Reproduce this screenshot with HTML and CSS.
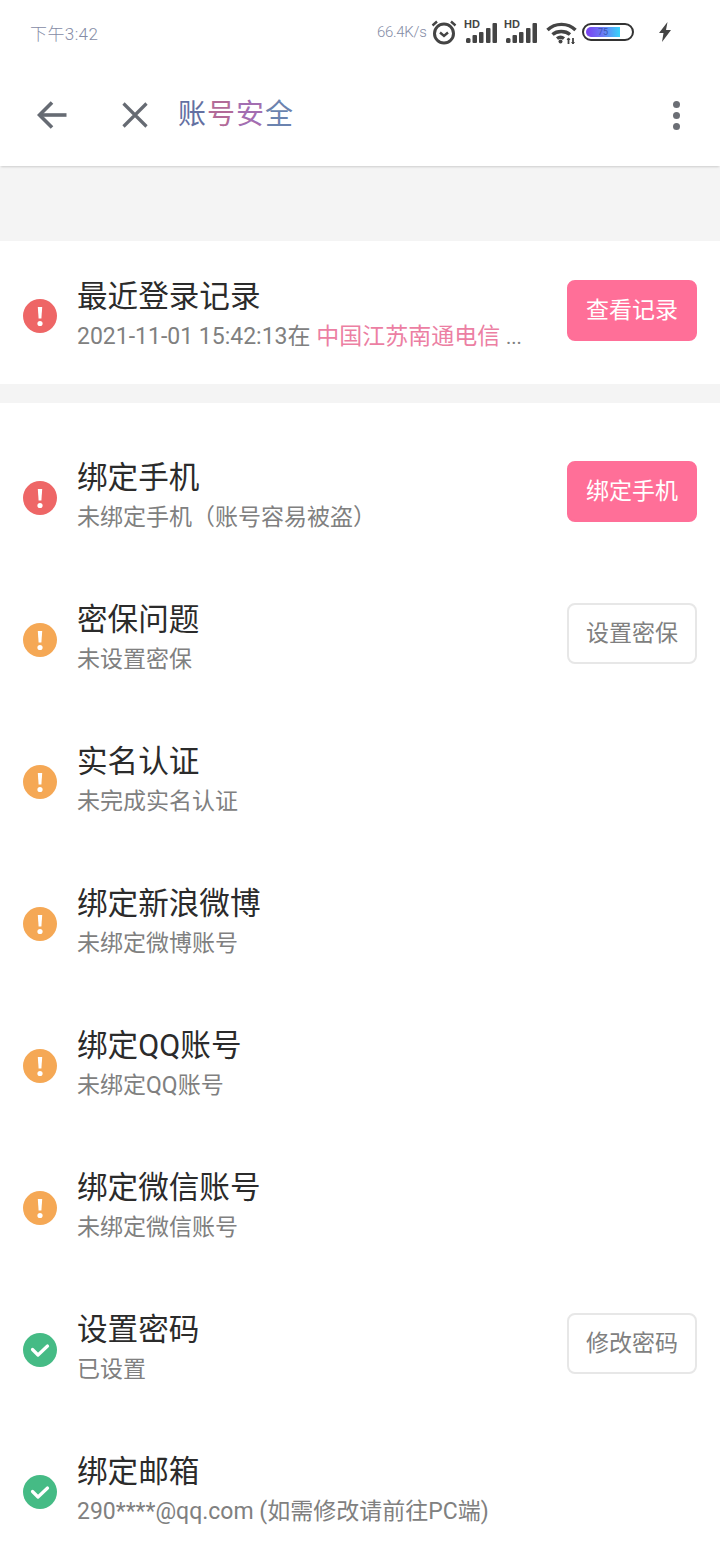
FILE: index.html
```html
<!DOCTYPE html>
<html lang="zh-CN">
<head>
	<meta charset="utf-8">
	<title>账号安全</title>
	<link rel="stylesheet" href="styles.css">
</head>
<body>
	<svg class="defs" width="0" height="0">
		<symbol id="warn" viewBox="0 0 34 34">
			<circle cx="17" cy="17" r="17"></circle>
			<path d="M14.800 8h4.400l-.8 11.500h-2.800z" fill="#fff"></path>
			<circle cx="17" cy="24.500" r="2.600" fill="#fff"></circle>
		</symbol>
		<symbol id="ok" viewBox="0 0 34 34">
			<circle cx="17" cy="17" r="17"></circle>
			<path d="M9.500 16.500l5.500 5.500 9.500-9" fill="none" stroke="#fff" stroke-width="3.200" stroke-linecap="round" stroke-linejoin="round"></path>
		</symbol>
		<symbol id="signal" viewBox="0 0 33 20">
			<rect x="2" y="15" width="4.500" height="5" rx="1.500"></rect>
			<rect x="8.500" y="12" width="4.500" height="8" rx="1"></rect>
			<rect x="15" y="9" width="4.500" height="11" rx="1"></rect>
			<rect x="22" y="5" width="4.500" height="15" rx="1"></rect>
			<rect x="28.500" y="0" width="4.500" height="20" rx="1"></rect>
		</symbol>
	</svg>

	<div class="status">
		<span class="time">下午3:42</span>
		<span class="speed">66.4K/s</span>
		<svg class="alarm" width="26" height="26" viewBox="0 0 26 26" fill="none" stroke="#444" stroke-width="3">
			<circle cx="13" cy="14.500" r="9.500"></circle>
			<path d="M9 13.500l4 3.500 4-3.500" stroke-width="2.400"></path>
			<path d="M1.500 6.500L6 2.500M24.500 6.500L20 2.500" stroke-width="2.400"></path>
		</svg>
		<div class="net"><span class="hd">HD</span><svg class="bars" width="33" height="20"><use href="#signal"></use></svg></div>
		<div class="net"><span class="hd">HD</span><svg class="bars" width="33" height="20"><use href="#signal"></use></svg></div>
		<svg class="wifi" width="31" height="22" viewBox="0 0 31 22" fill="none" stroke="#444" stroke-width="3.400">
			<path d="M1.500 8C9 .500 22 .500 29.500 8"></path>
			<path d="M6.500 12.500c4.500-4 13-4 17.500 0"></path>
			<path d="M11 16.500c2-1.500 5-1.500 7 0"></path>
			<circle cx="14.500" cy="19.500" r="2" fill="#444" stroke="none"></circle>
			<path d="M22.500 16v6M27 16v6" stroke-width="1.800"></path>
			<path d="M20.500 18l2-2.500 2 2.500zM25 20l2 2.500 2-2.500z" fill="#444" stroke="none"></path>
		</svg>
		<div class="battery"><div class="level">75</div></div>
		<svg class="bolt" width="14" height="20" viewBox="0 0 14 20"><path d="M9.500 0L1 11h4.500L4 20l9-12H8z" fill="#444"></path></svg>
	</div>

	<div class="toolbar">
		<svg class="back" width="30" height="28" viewBox="0 0 30 28" fill="none" stroke="#666b73" stroke-width="3.600">
			<path d="M29.500 14H3"></path>
			<path d="M15 1.500L2.500 14 15 26.500"></path>
		</svg>
		<svg class="close" width="26" height="26" viewBox="0 0 26 26" fill="none" stroke="#666b73" stroke-width="3.200">
			<path d="M1.500 1.500l23 23M24.500 1.500l-23 23"></path>
		</svg>
		<h1 class="title"><span class="c1">账</span><span class="c2">号</span><span class="c3">安</span><span class="c4">全</span></h1>
		<div class="more"><i></i><i></i><i></i></div>
	</div>

	<div class="gap-top"></div>

	<div class="row row-login">
		<svg class="mark red"><use href="#warn"></use></svg>
		<div class="info">
			<div class="name">最近登录记录</div>
			<div class="desc">2021-11-01 15:42:13在 <span class="place">中国江苏南通电信</span> <span class="dots">...</span></div>
		</div>
		<div class="btn btn-pink">查看记录</div>
	</div>

	<div class="gap-mid"></div>

	<div class="list">
		<div class="row">
			<svg class="mark red"><use href="#warn"></use></svg>
			<div class="info">
				<div class="name">绑定手机</div>
				<div class="desc">未绑定手机（账号容易被盗）</div>
			</div>
			<div class="btn btn-pink">绑定手机</div>
		</div>
		<div class="row">
			<svg class="mark orange"><use href="#warn"></use></svg>
			<div class="info">
				<div class="name">密保问题</div>
				<div class="desc">未设置密保</div>
			</div>
			<div class="btn btn-line">设置密保</div>
		</div>
		<div class="row">
			<svg class="mark orange"><use href="#warn"></use></svg>
			<div class="info">
				<div class="name">实名认证</div>
				<div class="desc">未完成实名认证</div>
			</div>
		</div>
		<div class="row">
			<svg class="mark orange"><use href="#warn"></use></svg>
			<div class="info">
				<div class="name">绑定新浪微博</div>
				<div class="desc">未绑定微博账号</div>
			</div>
		</div>
		<div class="row">
			<svg class="mark orange"><use href="#warn"></use></svg>
			<div class="info">
				<div class="name">绑定QQ账号</div>
				<div class="desc">未绑定QQ账号</div>
			</div>
		</div>
		<div class="row">
			<svg class="mark orange"><use href="#warn"></use></svg>
			<div class="info">
				<div class="name">绑定微信账号</div>
				<div class="desc">未绑定微信账号</div>
			</div>
		</div>
		<div class="row">
			<svg class="mark green"><use href="#ok"></use></svg>
			<div class="info">
				<div class="name">设置密码</div>
				<div class="desc">已设置</div>
			</div>
			<div class="btn btn-line">修改密码</div>
		</div>
		<div class="row">
			<svg class="mark green"><use href="#ok"></use></svg>
			<div class="info">
				<div class="name">绑定邮箱</div>
				<div class="desc">290****@qq.com (如需修改请前往PC端)</div>
			</div>
		</div>
	</div>
</body>
</html>
```

FILE: styles.css
```css
html, body {
	margin: 0;
	padding: 0;
	height: 1560px;
	overflow: hidden;
	background: #fff;
	font-family: Roboto, "Noto Sans CJK SC", sans-serif;
}

.defs {
	display: block;
	height: 0;
}

/* status bar */
.status {
	display: flex;
	align-items: center;
	height: 64px;
	padding-left: 30px;
}

.time {
	width: 347px;
	font-size: 17px;
	font-weight: 300;
	letter-spacing: 0.4px;
	color: #858ca6;
}

.speed {
	width: 54px;
	font-size: 15px;
	font-weight: 300;
	letter-spacing: -0.3px;
	color: #858ca6;
}

.alarm {
	margin-right: 7px;
}

.net {
	position: relative;
	width: 33px;
	height: 20px;
	margin-right: 7px;
	margin-top: 2px;
}

.hd {
	position: absolute;
	left: 0;
	top: -3px;
	font-family: "Liberation Sans", sans-serif;
	font-size: 11px;
	font-weight: bold;
	line-height: 9px;
	color: #444;
}

.bars {
	display: block;
	fill: #444;
}

.wifi {
	margin-left: 2px;
	margin-right: 5px;
	margin-top: 2px;
}

.battery {
	box-sizing: border-box;
	width: 52px;
	height: 18px;
	padding: 2px;
	border: 2px solid #333;
	border-radius: 9px;
}

.level {
	width: 34px;
	height: 10px;
	border-radius: 5px 0 0 5px;
	background: linear-gradient(to right, #7a3ff0, #6a7cf5 50%, #38d4fb);
	font-size: 9px;
	line-height: 10px;
	text-align: center;
	color: #3b56b0;
}

.bolt {
	margin-left: 24px;
}

/* toolbar */
.toolbar {
	position: relative;
	z-index: 1;
	display: flex;
	align-items: center;
	height: 102px;
	padding-left: 37px;
	background: #fff;
	box-shadow: 0 2px 2px -1px rgba(0, 0, 0, 0.16);
}

.close {
	margin-left: 55px;
}

.title {
	display: flex;
	margin: 0 0 0 30px;
	font-size: 28px;
	font-weight: normal;
	line-height: 36px;
	letter-spacing: 1px;
	opacity: 0.8;
}

.c1 { color: #3d4d8c; }
.c2 { color: #a0467f; }
.c3 { color: #8d4a9e; }
.c4 { color: #47659c; }

.more {
	display: flex;
	flex-direction: column;
	gap: 4px;
	margin-left: auto;
	margin-right: 40px;
}

.more i {
	display: block;
	width: 7px;
	height: 7px;
	border-radius: 50%;
	background: #6b6e75;
}

/* grey gaps */
.gap-top {
	height: 75px;
	background: #f4f4f4;
}

.gap-mid {
	height: 19px;
	background: #f4f4f4;
}

/* rows */
.list {
	padding-top: 24px;
}

.row {
	display: flex;
	align-items: center;
	height: 142px;
	padding: 0 23px;
}

.row-login {
	box-sizing: border-box;
	height: 143px;
	padding-top: 7px;
}

.row-login .info {
	padding-top: 1px;
}

.row-login .btn {
	margin-bottom: 11px;
}

.mark {
	flex-shrink: 0;
	width: 34px;
	height: 34px;
	margin-right: 20px;
}

.red { fill: #ee6666; }
.orange { fill: #f5a855; }
.green { fill: #45bb85; }

.info {
	flex: 1;
	min-width: 0;
	white-space: nowrap;
}

.name {
	font-size: 30.6px;
	line-height: 38px;
	color: #2b2b2b;
}

.desc {
	margin-top: 2px;
	font-size: 23px;
	line-height: 38px;
	color: #808080;
}

.place {
	color: #ec7fa3;
}

.dots {
	font-size: 20px;
}

.btn {
	box-sizing: border-box;
	flex-shrink: 0;
	width: 130px;
	height: 61px;
	margin-bottom: 14px;
	border-radius: 8px;
	font-size: 23px;
	line-height: 57px;
	text-align: center;
}

.btn-pink {
	border: 2px solid #ff6f98;
	background: #ff6f98;
	color: #fff;
}

.btn-line {
	border: 2px solid #e7e7e7;
	background: #fff;
	color: #808080;
}
```
